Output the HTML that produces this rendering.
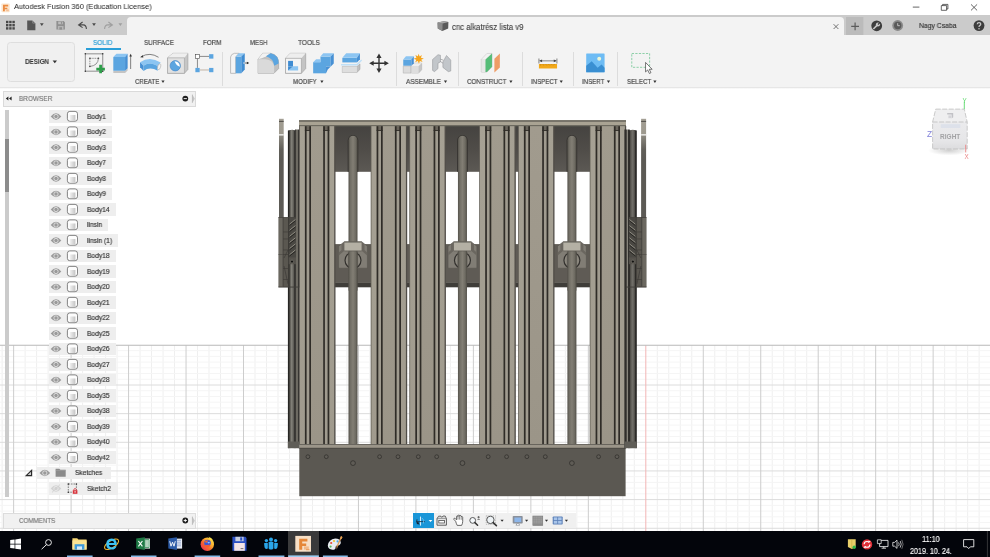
<!DOCTYPE html>
<html>
<head>
<meta charset="utf-8">
<title>Autodesk Fusion 360</title>
<style>
*{box-sizing:border-box;margin:0;padding:0}
html,body{width:990px;height:557px;overflow:hidden;background:#fff}
body{position:relative;font-family:"Liberation Sans",sans-serif;color:#333}
.abs{position:absolute}
.t{position:absolute;white-space:nowrap;line-height:1;will-change:transform}
#titlebar{left:0;top:0;width:990px;height:15px;background:#fff}
#graybar{left:0;top:15px;width:990px;height:20px;background:#cbcbcb}
#tabarea{left:127px;top:17px;width:716.5px;height:18px;background:#f3f3f3;border-radius:4px 4px 0 0}
#toolbar{left:0;top:35px;width:990px;height:52.4px;background:#f3f3f3}
#tbsh{left:0;top:87.4px;width:990px;height:2px;background:linear-gradient(#dcdcdc,#f4f4f4 60%,#fff)}
#canvas{left:0;top:88px;width:990px;height:443px}
#taskbar{left:0;top:531px;width:990px;height:26px;background:#03050b}
.tab{font-size:7.6px;color:#4a4a4a;top:38.7px;-webkit-text-stroke:0.2px #4a4a4a}
.grp{font-size:7.4px;color:#4a4a4a;top:78.3px;-webkit-text-stroke:0.2px #4a4a4a}
.sep{position:absolute;top:52px;height:33.5px;width:1px;background:#dcdcdc}
.row{position:absolute;left:49px;height:12.5px;background:#eeeeee}
.rt{position:absolute;left:86.6px;font-size:7.3px;color:#2e2e2e;white-space:nowrap;line-height:1;transform:scaleX(0.91);transform-origin:0 50%;will-change:transform;-webkit-text-stroke:0.15px #2e2e2e}
</style>
</head>
<body>
<!-- CANVAS -->
<svg id="canvas" class="abs" width="990" height="443" viewBox="0 88 990 443">
<!--GRID-->
<g fill="none" stroke-width="1">
<path stroke="#efefef" d="M2.14 345.3V531M25.12 345.3V531M36.62 345.3V531M48.11 345.3V531M59.61 345.3V531M82.59 345.3V531M94.09 345.3V531M105.58 345.3V531M117.08 345.3V531M140.06 345.3V531M151.56 345.3V531M163.05 345.3V531M174.55 345.3V531M197.53 345.3V531M209.03 345.3V531M220.52 345.3V531M232.02 345.3V531M255.00 345.3V531M266.50 345.3V531M277.99 345.3V531M289.49 345.3V531M312.47 345.3V531M323.97 345.3V531M335.46 345.3V531M346.96 345.3V531M369.94 345.3V531M381.44 345.3V531M392.93 345.3V531M404.43 345.3V531M427.41 345.3V531M438.91 345.3V531M450.40 345.3V531M461.90 345.3V531M484.88 345.3V531M496.38 345.3V531M507.87 345.3V531M519.37 345.3V531M542.35 345.3V531M553.85 345.3V531M565.34 345.3V531M576.84 345.3V531M599.82 345.3V531M611.32 345.3V531M622.81 345.3V531M634.31 345.3V531M657.29 345.3V531M668.79 345.3V531M680.28 345.3V531M691.78 345.3V531M714.76 345.3V531M726.26 345.3V531M737.75 345.3V531M749.25 345.3V531M772.23 345.3V531M783.73 345.3V531M795.22 345.3V531M806.72 345.3V531M829.70 345.3V531M841.20 345.3V531M852.69 345.3V531M864.19 345.3V531M887.17 345.3V531M898.67 345.3V531M910.16 345.3V531M921.66 345.3V531M944.64 345.3V531M956.14 345.3V531M967.63 345.3V531M979.13 345.3V531"/>
<path stroke="#f5f5f5" d="M0 350.62H990M0 356.35H990M0 362.08H990M0 367.81H990M0 373.54H990M0 379.27H990M0 390.73H990M0 396.46H990M0 402.19H990M0 407.92H990M0 419.38H990M0 425.11H990M0 430.84H990M0 436.57H990M0 448.03H990M0 453.76H990M0 459.49H990M0 465.22H990M0 476.68H990M0 482.41H990M0 488.14H990M0 493.87H990M0 505.33H990M0 511.06H990M0 516.79H990M0 522.52H990"/>
<path stroke="#dcdcdc" d="M0 385.00H990M0 413.65H990M0 442.30H990M0 470.95H990M0 499.60H990M0 528.25H990"/>
<path stroke="#cdcdcd" d="M13.63 345.3V531M71.10 345.3V531M128.57 345.3V531M186.04 345.3V531M243.51 345.3V531M300.98 345.3V531M358.45 345.3V531M415.92 345.3V531M473.39 345.3V531M530.86 345.3V531M588.33 345.3V531M703.27 345.3V531M760.74 345.3V531M818.21 345.3V531M875.68 345.3V531M933.15 345.3V531"/>
<path stroke="#f2b6b6" d="M645.80 345.3V531"/>
<path stroke="#b8b8b8" stroke-width="1.1" d="M0 345.3H990"/>
</g>
<!--/GRID-->
<!--MODEL-->
<defs>
<linearGradient id="gBack" x1="0" y1="0" x2="0" y2="1"><stop offset="0" stop-color="#454340"/><stop offset="0.5" stop-color="#4f4c48"/><stop offset="1" stop-color="#5c5954"/></linearGradient>
<linearGradient id="gRod" x1="0" y1="0" x2="1" y2="0"><stop offset="0" stop-color="#55524b"/><stop offset="0.22" stop-color="#726f66"/><stop offset="0.5" stop-color="#827e74"/><stop offset="0.8" stop-color="#6e6b62"/><stop offset="1" stop-color="#504d46"/></linearGradient>
<linearGradient id="gCylL" x1="0" y1="0" x2="1" y2="0"><stop offset="0" stop-color="#242321"/><stop offset="0.1" stop-color="#2a2927"/><stop offset="0.17" stop-color="#55534d"/><stop offset="0.33" stop-color="#84827a"/><stop offset="0.5" stop-color="#5f5d57"/><stop offset="0.55" stop-color="#383633"/><stop offset="0.67" stop-color="#383633"/><stop offset="0.70" stop-color="#6d6a62"/><stop offset="0.86" stop-color="#6d6a62"/><stop offset="0.9" stop-color="#383633"/><stop offset="1" stop-color="#383633"/></linearGradient>
<linearGradient id="gCylR" x1="1" y1="0" x2="0" y2="0"><stop offset="0" stop-color="#242321"/><stop offset="0.1" stop-color="#2a2927"/><stop offset="0.17" stop-color="#4f4d48"/><stop offset="0.32" stop-color="#72706a"/><stop offset="0.5" stop-color="#5a5852"/><stop offset="0.55" stop-color="#302e2b"/><stop offset="0.69" stop-color="#302e2b"/><stop offset="0.72" stop-color="#88857c"/><stop offset="0.81" stop-color="#88857c"/><stop offset="0.84" stop-color="#302e2b"/><stop offset="1" stop-color="#302e2b"/></linearGradient>
<linearGradient id="gProf" x1="0" y1="0" x2="0" y2="1"><stop offset="0" stop-color="#a6a194"/><stop offset="0.5" stop-color="#a39e91"/><stop offset="1" stop-color="#a09a8d"/></linearGradient>
<linearGradient id="gFace" x1="0" y1="0" x2="0" y2="1"><stop offset="0" stop-color="#a19b8e"/><stop offset="0.5" stop-color="#9e988b"/><stop offset="1" stop-color="#9b9588"/></linearGradient>
<linearGradient id="gBar" gradientUnits="userSpaceOnUse" x1="0" y1="118.8" x2="0" y2="160"><stop offset="0" stop-color="#a39f94"/><stop offset="0.36" stop-color="#9d998e"/><stop offset="0.42" stop-color="#8a877e"/><stop offset="0.75" stop-color="#615f59"/><stop offset="1" stop-color="#5c5a55"/></linearGradient>
</defs>
<rect x="299.30" y="126.00" width="326.30" height="45.80" fill="url(#gBack)"/>
<rect x="299.30" y="244.10" width="326.30" height="38.80" fill="#5f5b55"/>
<rect x="299.30" y="282.80" width="326.30" height="4.50" fill="#3f3d39"/>
<path d="M347.70 171.8V140.40A5.3 5.3 0 0 1 358.30 140.40V171.8Z" fill="#33312e"/>
<path d="M348.50 444.3V140.30A4.5 4.5 0 0 1 357.50 140.30V444.3Z" fill="url(#gRod)"/>
<path d="M338.60 268.2V246.3L344.20 241.8H361.80L367.40 246.3V268.2Z" fill="#817d75" stroke="#55524c" stroke-width="0.5"/>
<circle cx="353.00" cy="260.3" r="8.0" fill="#8b877e" stroke="#33312e" stroke-width="1.2"/>
<rect x="348.50" y="250.6" width="9" height="40" fill="url(#gRod)"/>
<path d="M348.40 252V268M357.60 252V268" stroke="#4a4843" stroke-width="0.5"/>
<path d="M341.50 244.3L344.40 241.9V250.7L338.80 255.6V252.6L341.50 250Z" fill="#6a665f"/>
<path d="M364.50 244.3L361.60 241.9V250.7L367.20 255.6V252.6L364.50 250Z" fill="#6a665f"/>
<rect x="344.40" y="250.40" width="17.20" height="0.90" fill="#5a5750"/>
<rect x="344.50" y="242.40" width="17.00" height="8.10" fill="#b4b0a4"/>
<rect x="344.20" y="241.50" width="17.60" height="0.90" fill="#6a665f"/>
<path d="M457.15 171.8V140.40A5.3 5.3 0 0 1 467.75 140.40V171.8Z" fill="#33312e"/>
<path d="M457.95 444.3V140.30A4.5 4.5 0 0 1 466.95 140.30V444.3Z" fill="url(#gRod)"/>
<path d="M448.05 268.2V246.3L453.65 241.8H471.25L476.85 246.3V268.2Z" fill="#817d75" stroke="#55524c" stroke-width="0.5"/>
<circle cx="462.45" cy="260.3" r="8.0" fill="#8b877e" stroke="#33312e" stroke-width="1.2"/>
<rect x="457.95" y="250.6" width="9" height="40" fill="url(#gRod)"/>
<path d="M457.85 252V268M467.05 252V268" stroke="#4a4843" stroke-width="0.5"/>
<path d="M450.95 244.3L453.85 241.9V250.7L448.25 255.6V252.6L450.95 250Z" fill="#6a665f"/>
<path d="M473.95 244.3L471.05 241.9V250.7L476.65 255.6V252.6L473.95 250Z" fill="#6a665f"/>
<rect x="453.85" y="250.40" width="17.20" height="0.90" fill="#5a5750"/>
<rect x="453.95" y="242.40" width="17.00" height="8.10" fill="#b4b0a4"/>
<rect x="453.65" y="241.50" width="17.60" height="0.90" fill="#6a665f"/>
<path d="M566.60 171.8V140.40A5.3 5.3 0 0 1 577.20 140.40V171.8Z" fill="#33312e"/>
<path d="M567.40 444.3V140.30A4.5 4.5 0 0 1 576.40 140.30V444.3Z" fill="url(#gRod)"/>
<path d="M557.50 268.2V246.3L563.10 241.8H580.70L586.30 246.3V268.2Z" fill="#817d75" stroke="#55524c" stroke-width="0.5"/>
<circle cx="571.90" cy="260.3" r="8.0" fill="#8b877e" stroke="#33312e" stroke-width="1.2"/>
<rect x="567.40" y="250.6" width="9" height="40" fill="url(#gRod)"/>
<path d="M567.30 252V268M576.50 252V268" stroke="#4a4843" stroke-width="0.5"/>
<path d="M560.40 244.3L563.30 241.9V250.7L557.70 255.6V252.6L560.40 250Z" fill="#6a665f"/>
<path d="M583.40 244.3L580.50 241.9V250.7L586.10 255.6V252.6L583.40 250Z" fill="#6a665f"/>
<rect x="563.30" y="250.40" width="17.20" height="0.90" fill="#5a5750"/>
<rect x="563.40" y="242.40" width="17.00" height="8.10" fill="#b4b0a4"/>
<rect x="563.10" y="241.50" width="17.60" height="0.90" fill="#6a665f"/>
<rect x="299.30" y="126.00" width="35.60" height="318.30" fill="url(#gProf)"/>
<rect x="310.80" y="126.00" width="12.60" height="318.30" fill="url(#gFace)"/>
<rect x="299.00" y="126.00" width="0.70" height="318.30" fill="#5d5a52"/>
<rect x="334.20" y="126.00" width="1.30" height="318.30" fill="#504d47"/>
<rect x="304.90" y="126.00" width="6.10" height="318.30" fill="#a09b8f"/>
<rect x="304.90" y="126.00" width="6.10" height="4.40" fill="#6a655c"/>
<rect x="304.90" y="130.00" width="6.10" height="0.90" fill="#2f2c27"/>
<rect x="304.90" y="126.00" width="1.70" height="318.30" fill="#2f2c27"/>
<rect x="309.30" y="126.00" width="1.70" height="318.30" fill="#2f2c27"/>
<rect x="323.20" y="126.00" width="6.10" height="318.30" fill="#a09b8f"/>
<rect x="323.20" y="126.00" width="6.10" height="4.40" fill="#6a655c"/>
<rect x="323.20" y="130.00" width="6.10" height="0.90" fill="#2f2c27"/>
<rect x="323.20" y="126.00" width="1.70" height="318.30" fill="#2f2c27"/>
<rect x="327.60" y="126.00" width="1.70" height="318.30" fill="#2f2c27"/>
<rect x="590.00" y="126.00" width="35.60" height="318.30" fill="url(#gProf)"/>
<rect x="601.50" y="126.00" width="12.60" height="318.30" fill="url(#gFace)"/>
<rect x="589.70" y="126.00" width="0.70" height="318.30" fill="#5d5a52"/>
<rect x="624.90" y="126.00" width="1.30" height="318.30" fill="#504d47"/>
<rect x="595.60" y="126.00" width="6.10" height="318.30" fill="#a09b8f"/>
<rect x="595.60" y="126.00" width="6.10" height="4.40" fill="#6a655c"/>
<rect x="595.60" y="130.00" width="6.10" height="0.90" fill="#2f2c27"/>
<rect x="595.60" y="126.00" width="1.70" height="318.30" fill="#2f2c27"/>
<rect x="600.00" y="126.00" width="1.70" height="318.30" fill="#2f2c27"/>
<rect x="613.90" y="126.00" width="6.10" height="318.30" fill="#a09b8f"/>
<rect x="613.90" y="126.00" width="6.10" height="4.40" fill="#6a655c"/>
<rect x="613.90" y="130.00" width="6.10" height="0.90" fill="#2f2c27"/>
<rect x="613.90" y="126.00" width="1.70" height="318.30" fill="#2f2c27"/>
<rect x="618.30" y="126.00" width="1.70" height="318.30" fill="#2f2c27"/>
<rect x="371.00" y="126.00" width="35.60" height="318.30" fill="url(#gProf)"/>
<rect x="382.50" y="126.00" width="12.60" height="318.30" fill="url(#gFace)"/>
<rect x="370.70" y="126.00" width="0.70" height="318.30" fill="#5d5a52"/>
<rect x="405.90" y="126.00" width="1.30" height="318.30" fill="#504d47"/>
<rect x="376.60" y="126.00" width="6.10" height="318.30" fill="#a09b8f"/>
<rect x="376.60" y="126.00" width="6.10" height="4.40" fill="#6a655c"/>
<rect x="376.60" y="130.00" width="6.10" height="0.90" fill="#2f2c27"/>
<rect x="376.60" y="126.00" width="1.70" height="318.30" fill="#2f2c27"/>
<rect x="381.00" y="126.00" width="1.70" height="318.30" fill="#2f2c27"/>
<rect x="394.90" y="126.00" width="6.10" height="318.30" fill="#a09b8f"/>
<rect x="394.90" y="126.00" width="6.10" height="4.40" fill="#6a655c"/>
<rect x="394.90" y="130.00" width="6.10" height="0.90" fill="#2f2c27"/>
<rect x="394.90" y="126.00" width="1.70" height="318.30" fill="#2f2c27"/>
<rect x="399.30" y="126.00" width="1.70" height="318.30" fill="#2f2c27"/>
<rect x="518.30" y="126.00" width="35.60" height="318.30" fill="url(#gProf)"/>
<rect x="529.80" y="126.00" width="12.60" height="318.30" fill="url(#gFace)"/>
<rect x="518.00" y="126.00" width="0.70" height="318.30" fill="#5d5a52"/>
<rect x="553.20" y="126.00" width="1.30" height="318.30" fill="#504d47"/>
<rect x="523.90" y="126.00" width="6.10" height="318.30" fill="#a09b8f"/>
<rect x="523.90" y="126.00" width="6.10" height="4.40" fill="#6a655c"/>
<rect x="523.90" y="130.00" width="6.10" height="0.90" fill="#2f2c27"/>
<rect x="523.90" y="126.00" width="1.70" height="318.30" fill="#2f2c27"/>
<rect x="528.30" y="126.00" width="1.70" height="318.30" fill="#2f2c27"/>
<rect x="542.20" y="126.00" width="6.10" height="318.30" fill="#a09b8f"/>
<rect x="542.20" y="126.00" width="6.10" height="4.40" fill="#6a655c"/>
<rect x="542.20" y="130.00" width="6.10" height="0.90" fill="#2f2c27"/>
<rect x="542.20" y="126.00" width="1.70" height="318.30" fill="#2f2c27"/>
<rect x="546.60" y="126.00" width="1.70" height="318.30" fill="#2f2c27"/>
<rect x="409.70" y="126.00" width="35.60" height="318.30" fill="url(#gProf)"/>
<rect x="421.20" y="126.00" width="12.60" height="318.30" fill="url(#gFace)"/>
<rect x="409.40" y="126.00" width="0.70" height="318.30" fill="#5d5a52"/>
<rect x="444.60" y="126.00" width="1.30" height="318.30" fill="#504d47"/>
<rect x="415.30" y="126.00" width="6.10" height="318.30" fill="#a09b8f"/>
<rect x="415.30" y="126.00" width="6.10" height="4.40" fill="#6a655c"/>
<rect x="415.30" y="130.00" width="6.10" height="0.90" fill="#2f2c27"/>
<rect x="415.30" y="126.00" width="1.70" height="318.30" fill="#2f2c27"/>
<rect x="419.70" y="126.00" width="1.70" height="318.30" fill="#2f2c27"/>
<rect x="433.60" y="126.00" width="6.10" height="318.30" fill="#a09b8f"/>
<rect x="433.60" y="126.00" width="6.10" height="4.40" fill="#6a655c"/>
<rect x="433.60" y="130.00" width="6.10" height="0.90" fill="#2f2c27"/>
<rect x="433.60" y="126.00" width="1.70" height="318.30" fill="#2f2c27"/>
<rect x="438.00" y="126.00" width="1.70" height="318.30" fill="#2f2c27"/>
<rect x="479.60" y="126.00" width="35.60" height="318.30" fill="url(#gProf)"/>
<rect x="491.10" y="126.00" width="12.60" height="318.30" fill="url(#gFace)"/>
<rect x="479.30" y="126.00" width="0.70" height="318.30" fill="#5d5a52"/>
<rect x="514.50" y="126.00" width="1.30" height="318.30" fill="#504d47"/>
<rect x="485.20" y="126.00" width="6.10" height="318.30" fill="#a09b8f"/>
<rect x="485.20" y="126.00" width="6.10" height="4.40" fill="#6a655c"/>
<rect x="485.20" y="130.00" width="6.10" height="0.90" fill="#2f2c27"/>
<rect x="485.20" y="126.00" width="1.70" height="318.30" fill="#2f2c27"/>
<rect x="489.60" y="126.00" width="1.70" height="318.30" fill="#2f2c27"/>
<rect x="503.50" y="126.00" width="6.10" height="318.30" fill="#a09b8f"/>
<rect x="503.50" y="126.00" width="6.10" height="4.40" fill="#6a655c"/>
<rect x="503.50" y="130.00" width="6.10" height="0.90" fill="#2f2c27"/>
<rect x="503.50" y="126.00" width="1.70" height="318.30" fill="#2f2c27"/>
<rect x="507.90" y="126.00" width="1.70" height="318.30" fill="#2f2c27"/>
<rect x="299.00" y="120.20" width="327.00" height="5.90" fill="#a9a393"/>
<rect x="299.00" y="120.20" width="327.00" height="1.60" fill="#6c685f"/>
<rect x="299.00" y="125.30" width="327.00" height="0.80" fill="#55524b"/>
<rect x="299.30" y="444.30" width="326.30" height="4.00" fill="#9b9589"/>
<rect x="299.30" y="444.00" width="326.30" height="0.70" fill="#4c4943"/>
<rect x="299.30" y="448.00" width="326.30" height="48.20" fill="#5b5852"/>
<rect x="299.30" y="447.80" width="326.30" height="0.80" fill="#47443f"/>
<circle cx="307.90" cy="456.70" r="1.90" fill="#5f5c56" stroke="#2d2b28" stroke-width="0.7"/>
<circle cx="617.00" cy="456.70" r="1.90" fill="#5f5c56" stroke="#2d2b28" stroke-width="0.7"/>
<circle cx="326.30" cy="456.70" r="1.90" fill="#5f5c56" stroke="#2d2b28" stroke-width="0.7"/>
<circle cx="598.60" cy="456.70" r="1.90" fill="#5f5c56" stroke="#2d2b28" stroke-width="0.7"/>
<circle cx="379.60" cy="456.70" r="1.90" fill="#5f5c56" stroke="#2d2b28" stroke-width="0.7"/>
<circle cx="545.30" cy="456.70" r="1.90" fill="#5f5c56" stroke="#2d2b28" stroke-width="0.7"/>
<circle cx="398.00" cy="456.70" r="1.90" fill="#5f5c56" stroke="#2d2b28" stroke-width="0.7"/>
<circle cx="526.90" cy="456.70" r="1.90" fill="#5f5c56" stroke="#2d2b28" stroke-width="0.7"/>
<circle cx="418.30" cy="456.70" r="1.90" fill="#5f5c56" stroke="#2d2b28" stroke-width="0.7"/>
<circle cx="506.60" cy="456.70" r="1.90" fill="#5f5c56" stroke="#2d2b28" stroke-width="0.7"/>
<circle cx="436.70" cy="456.70" r="1.90" fill="#5f5c56" stroke="#2d2b28" stroke-width="0.7"/>
<circle cx="488.20" cy="456.70" r="1.90" fill="#5f5c56" stroke="#2d2b28" stroke-width="0.7"/>
<circle cx="353.00" cy="463.10" r="2.40" fill="#5f5c56" stroke="#2d2b28" stroke-width="0.7"/>
<circle cx="462.45" cy="463.10" r="2.40" fill="#5f5c56" stroke="#2d2b28" stroke-width="0.7"/>
<circle cx="571.90" cy="463.10" r="2.40" fill="#5f5c56" stroke="#2d2b28" stroke-width="0.7"/>
<path d="M287.9 448.2V130.6Q292 129.2 295 130.2V129.4H299.2V448.2Z" fill="url(#gCylL)"/>
<path d="M636.8 448.2V130.6Q632.8 129.2 629.8 130.2V129.4H624.4V448.2Z" fill="url(#gCylR)"/>
<rect x="287.90" y="441.50" width="11.40" height="6.50" fill="#5f5d57"/>
<rect x="624.40" y="441.50" width="12.40" height="6.50" fill="#5f5d57"/>
<rect x="279.00" y="118.80" width="4.70" height="168.00" fill="url(#gBar)"/>
<rect x="641.10" y="118.80" width="5.00" height="168.00" fill="url(#gBar)"/>
<rect x="279.00" y="120.90" width="4.70" height="0.90" fill="#45433f"/>
<rect x="279.00" y="134.20" width="4.70" height="1.30" fill="#f6f6f4"/>
<rect x="641.10" y="120.90" width="5.00" height="0.90" fill="#45433f"/>
<rect x="641.10" y="134.20" width="5.00" height="1.30" fill="#f6f6f4"/>
<rect x="278.40" y="217.40" width="4.60" height="69.70" fill="#6b6860"/>
<rect x="283.00" y="217.40" width="5.70" height="69.70" fill="#5a5750"/>
<rect x="288.70" y="217.40" width="7.30" height="45.00" fill="#4a4843"/>
<rect x="278.40" y="217.00" width="17.60" height="0.80" fill="#45433e"/>
<rect x="278.40" y="286.60" width="20.80" height="0.90" fill="#3f3d39"/>
<rect x="282.70" y="217.40" width="0.70" height="69.10" fill="#3c3a36"/>
<rect x="288.40" y="217.40" width="0.70" height="69.10" fill="#34322f"/>
<rect x="283.00" y="231.60" width="5.70" height="0.70" fill="#3f3d39"/>
<rect x="283.00" y="238.60" width="5.70" height="0.70" fill="#3f3d39"/>
<rect x="283.00" y="249.60" width="5.70" height="0.70" fill="#3f3d39"/>
<rect x="283.00" y="254.20" width="5.70" height="0.70" fill="#3f3d39"/>
<rect x="283.00" y="268.00" width="5.70" height="0.70" fill="#3f3d39"/>
<rect x="283.00" y="279.00" width="5.70" height="0.70" fill="#3f3d39"/>
<rect x="278.40" y="254.00" width="4.60" height="0.60" fill="#4a4843"/>
<path d="M289.60 224.10L295.40 219.50M289.60 230.20L295.40 225.60M289.60 236.30L295.40 231.70M289.60 242.40L295.40 237.80M289.60 248.50L295.40 243.90M289.60 254.60L295.40 250.00" fill="none" stroke="#8e8b81" stroke-width="1.0"/>
<path d="M289.60 225.50L295.40 220.90M289.60 231.60L295.40 227.00M289.60 237.70L295.40 233.10M289.60 243.80L295.40 239.20M289.60 249.90L295.40 245.30M289.60 256.00L295.40 251.40" fill="none" stroke="#24231f" stroke-width="0.9"/>
<rect x="288.70" y="257.40" width="7.30" height="6.80" fill="#55524c"/>
<circle cx="292.00" cy="261.6" r="1.5" fill="#141312" stroke="#8d8a80" stroke-width="0.5"/>
<path d="M284.00 266L288.00 284M284.00 258L288.00 250" stroke="#3c3a36" stroke-width="0.7" fill="none"/>
<rect x="641.90" y="217.40" width="4.60" height="69.70" fill="#6b6860"/>
<rect x="636.20" y="217.40" width="5.70" height="69.70" fill="#5a5750"/>
<rect x="628.90" y="217.40" width="7.30" height="45.00" fill="#4a4843"/>
<rect x="628.90" y="217.00" width="17.60" height="0.80" fill="#45433e"/>
<rect x="625.70" y="286.60" width="20.80" height="0.90" fill="#3f3d39"/>
<rect x="641.50" y="217.40" width="0.70" height="69.10" fill="#3c3a36"/>
<rect x="635.80" y="217.40" width="0.70" height="69.10" fill="#34322f"/>
<rect x="636.20" y="231.60" width="5.70" height="0.70" fill="#3f3d39"/>
<rect x="636.20" y="238.60" width="5.70" height="0.70" fill="#3f3d39"/>
<rect x="636.20" y="249.60" width="5.70" height="0.70" fill="#3f3d39"/>
<rect x="636.20" y="254.20" width="5.70" height="0.70" fill="#3f3d39"/>
<rect x="636.20" y="268.00" width="5.70" height="0.70" fill="#3f3d39"/>
<rect x="636.20" y="279.00" width="5.70" height="0.70" fill="#3f3d39"/>
<rect x="641.90" y="254.00" width="4.60" height="0.60" fill="#4a4843"/>
<path d="M635.30 224.10L629.50 219.50M635.30 230.20L629.50 225.60M635.30 236.30L629.50 231.70M635.30 242.40L629.50 237.80M635.30 248.50L629.50 243.90M635.30 254.60L629.50 250.00" fill="none" stroke="#8e8b81" stroke-width="1.0"/>
<path d="M635.30 225.50L629.50 220.90M635.30 231.60L629.50 227.00M635.30 237.70L629.50 233.10M635.30 243.80L629.50 239.20M635.30 249.90L629.50 245.30M635.30 256.00L629.50 251.40" fill="none" stroke="#24231f" stroke-width="0.9"/>
<rect x="628.90" y="257.40" width="7.30" height="6.80" fill="#55524c"/>
<circle cx="632.90" cy="261.6" r="1.5" fill="#141312" stroke="#8d8a80" stroke-width="0.5"/>
<path d="M640.90 266L636.90 284M640.90 258L636.90 250" stroke="#3c3a36" stroke-width="0.7" fill="none"/>
<!--/MODEL-->
<!--CUBE-->
<defs><linearGradient id="gcf" x1="0" y1="0" x2="0" y2="1"><stop offset="0" stop-color="#ebebed"/><stop offset="0.7" stop-color="#e6e6e8"/><stop offset="1" stop-color="#dcdcde"/></linearGradient>
<radialGradient id="gsh" cx="0.5" cy="0.5" r="0.5"><stop offset="0" stop-color="#888" stop-opacity="0.4"/><stop offset="1" stop-color="#999" stop-opacity="0"/></radialGradient></defs>
<ellipse cx="949" cy="150.5" rx="21" ry="5" fill="url(#gsh)"/>
<path d="M935.7 109.1H964.3L967.2 122H932.6Z" fill="#efeff0"/>
<path d="M932.6 122H967.2V149H932.6Z" fill="url(#gcf)"/>
<rect x="940.8" y="124.2" width="19.5" height="3.8" fill="#dde1ea"/>
<path d="M935.7 109.1H964.3L967.2 122V149H932.6V122Z" fill="none" stroke="#b8b8b8" stroke-width="0.7" stroke-dasharray="5 1.5"/>
<path d="M932.6 122H967.2" stroke="#b8b8b8" stroke-width="0.7" stroke-dasharray="5 1.5"/>
<path d="M947.2 113H953.2V117.2L951.6 118.4V114.6H947.2Z" fill="#c2c2c6"/><path d="M948.4 115.4H951V118.2H948.4Z" fill="#d4d4d8"/>
<path d="M964.3 109.1V101.6" stroke="#5bd86a" stroke-width="0.9"/><path d="M965.7 144.7V152.4" stroke="#ea8484" stroke-width="0.9"/>
<g font-family="Liberation Sans, sans-serif" style="will-change:transform">
<text x="940.1" y="139" font-size="7.8" fill="#a2a2a4" textLength="20.2" lengthAdjust="spacingAndGlyphs" font-weight="bold">RIGHT</text>
<text x="926.9" y="136.5" font-size="9.6" fill="#8282da" textLength="5.1" lengthAdjust="spacingAndGlyphs">Z</text>
<text x="962.5" y="102.7" font-size="8" fill="#5bd86a" textLength="4.2" lengthAdjust="spacingAndGlyphs">Y</text>
<text x="964.5" y="158.6" font-size="8" fill="#ea8484" textLength="4.2" lengthAdjust="spacingAndGlyphs">X</text>
</g>

<!--/CUBE-->
</svg>

<!-- TITLE BAR -->
<div id="titlebar" class="abs"></div>
<div id="graybar" class="abs"></div>
<div id="tabarea" class="abs"></div>
<div id="toolbar" class="abs"></div><div id="tbsh" class="abs"></div>
<!--CHROME-->
<!-- title -->
<svg class="abs" style="left:0.8px;top:2.6px" width="10" height="10" viewBox="0 0 12 12"><rect x="0.5" y="0.5" width="10" height="10.5" rx="1" fill="#fbe6cf"/><path d="M2.4 2.2H8.6V4.2H4.6V5.6H7.6V7.4H4.6V10H2.4Z" fill="#ec8c42"/><path d="M6.2 7.6H9.4V9.9H6.2Z" fill="#f5c096"/></svg>
<div class="t" id="ttl" style="left:14.3px;top:3.3px;font-size:8px;color:#1a1a1a;transform:scaleX(0.9291);transform-origin:0 50%">Autodesk Fusion 360 (Education License)</div>
<svg class="abs" style="left:900px;top:0" width="90" height="15" viewBox="900 0 90 15" fill="none" stroke="#333" stroke-width="0.75"><path d="M912.8 7.1H919.4"/><path d="M941.3 5.6H946.6V10.3H941.3Z"/><path d="M942.6 5.6V4.4H947.9V9H946.6"/><path d="M971 4.4L977.1 10.4M977.1 4.4L971 10.4"/></svg>
<!-- quick access icons -->
<svg class="abs" style="left:0;top:15px" width="130" height="20" viewBox="0 15 130 20">
<g fill="#484848"><rect x="6" y="20.8" width="2.4" height="2.4"/><rect x="9.2" y="20.8" width="2.4" height="2.4"/><rect x="12.4" y="20.8" width="2.4" height="2.4"/><rect x="6" y="24" width="2.4" height="2.4"/><rect x="9.2" y="24" width="2.4" height="2.4"/><rect x="12.4" y="24" width="2.4" height="2.4"/><rect x="6" y="27.2" width="2.4" height="2.4"/><rect x="9.2" y="27.2" width="2.4" height="2.4"/><rect x="12.4" y="27.2" width="2.4" height="2.4"/></g>
<path d="M27.2 20.4H32.4L35.4 23.4V30.2H27.2Z" fill="#555"/><path d="M32.6 20.4V23.2H35.4Z" fill="#cbcbcb"/><path d="M32.9 20.9V22.9H34.9Z" fill="#6a6a6a"/>
<path d="M39.9 23.2H43.7L41.8 25.9Z" fill="#4a4a4a"/>
<path d="M56.4 21H63.6L64.9 22.3V29.6H56.4Z" fill="#8f8f8f"/><rect x="58.2" y="21.5" width="4.6" height="2.7" fill="#bcbcbc"/><rect x="60.9" y="21.8" width="1.1" height="2" fill="#8f8f8f"/><rect x="57.9" y="26" width="5.6" height="3.6" fill="#b6b6b6"/><rect x="59.4" y="27.2" width="2.6" height="2.4" fill="#8f8f8f"/>
<path d="M82.6 22L78.6 25L82.6 27.6M78.9 24.9H83.2Q86.3 25 86.4 29" fill="none" stroke="#4a4a4a" stroke-width="1.1"/>
<path d="M92.1 23.2H95.9L94 25.9Z" fill="#4a4a4a"/>
<path d="M108.4 22L112.4 25L108.4 27.6M112.1 24.9H107.8Q104.7 25 104.6 29" fill="none" stroke="#9f9f9f" stroke-width="1.1"/>
<path d="M118.5 23.2H122.3L120.4 25.9Z" fill="#9f9f9f"/>
</svg>
<!-- doc tab -->
<svg class="abs" style="left:437px;top:20px" width="13" height="12" viewBox="0 0 13 12"><path d="M0.6 2.4L6.8 1.2L11.4 2L11.2 8.4L5.4 11L0.8 8.6Z" fill="#5a5a5a"/><path d="M0.6 2.4L5.6 3.6L5.4 11L0.8 8.6Z" fill="#8c8c8c"/><path d="M0.6 2.4L6.8 1.2L11.4 2L5.6 3.6Z" fill="#a8a8a8"/></svg>
<div class="t" id="doc" style="left:451.5px;top:23.3px;font-size:8.3px;color:#3a3a3a;-webkit-text-stroke:0.1px #3a3a3a;transform:scaleX(0.9341);transform-origin:0 50%">cnc alkatrész lista v9</div>
<svg class="abs" style="left:830px;top:15px" width="160" height="20" viewBox="830 15 160 20">
<path d="M833.6 24.2L838.4 29M838.4 24.2L833.6 29" stroke="#666" stroke-width="0.9" fill="none"/>
<rect x="846" y="17" width="17.4" height="18" fill="#bbbbbb"/>
<path d="M851.2 26.4H859M855.1 22.5V30.3" stroke="#5c5c5c" stroke-width="1.2" fill="none"/>
<circle cx="876.7" cy="25.8" r="5.4" fill="#3d3d3d"/><path d="M873.4 29L877 25.4" stroke="#cbcbcb" stroke-width="1.5"/><circle cx="878" cy="24.5" r="2.1" fill="#cbcbcb"/><path d="M878 24.5L880.4 22.1" stroke="#3d3d3d" stroke-width="1.2"/>
<circle cx="897.7" cy="25.5" r="5.4" fill="#8a8a8a"/><circle cx="897.7" cy="25.5" r="3.7" fill="#5a5a5a"/><path d="M897.7 23.2V25.7H899.8" stroke="#cbcbcb" stroke-width="0.9" fill="none"/>
<circle cx="979" cy="25.6" r="5.4" fill="#3d3d3d"/><path d="M977.2 24.2Q977.3 22.6 979 22.6Q980.8 22.6 980.8 24.1Q980.8 25 979.7 25.6Q979 26 979 27" stroke="#cbcbcb" stroke-width="1.2" fill="none"/><circle cx="979" cy="28.7" r="0.75" fill="#cbcbcb"/>
</svg>
<div class="t" id="usr" style="left:918.8px;top:22px;font-size:7.4px;color:#333;-webkit-text-stroke:0.15px #333;transform:scaleX(0.9220);transform-origin:0 50%">Nagy Csaba</div>
<!-- toolbar tabs -->
<div class="t tab" id="tb1" style="left:93px;color:#2a9fd8;-webkit-text-stroke:0.2px #2a9fd8;transform:scaleX(0.8510);transform-origin:0 50%">SOLID</div>
<div class="abs" style="left:85.5px;top:48px;width:35px;height:1.7px;background:#2a9fd8"></div>
<div class="t tab" id="tb2" style="left:144px;transform:scaleX(0.8362);transform-origin:0 50%">SURFACE</div>
<div class="t tab" id="tb3" style="left:203px;transform:scaleX(0.8274);transform-origin:0 50%">FORM</div>
<div class="t tab" id="tb4" style="left:250.3px;transform:scaleX(0.7926);transform-origin:0 50%">MESH</div>
<div class="t tab" id="tb5" style="left:297.6px;transform:scaleX(0.8552);transform-origin:0 50%">TOOLS</div>
<!-- design button -->
<div class="abs" style="left:7.3px;top:42.3px;width:67.4px;height:39.3px;border:1px solid #dedede;border-radius:3.5px;background:#f0f0f0"></div>
<div class="t" id="dsg" style="left:25.2px;top:58.4px;font-size:7.2px;color:#333;font-weight:bold;letter-spacing:-0.1px;transform:scaleX(0.8899);transform-origin:0 50%">DESIGN</div>
<svg class="abs" style="left:52px;top:60px" width="6" height="4"><path d="M0.6 0.6H5L2.8 3.2Z" fill="#333"/></svg>
<!-- group labels -->
<div class="t grp" id="g1" style="left:134.5px;transform:scaleX(0.8255);transform-origin:0 50%">CREATE</div>
<div class="t grp" id="g2" style="left:293px;transform:scaleX(0.8243);transform-origin:0 50%">MODIFY</div>
<div class="t grp" id="g3" style="left:406.2px;transform:scaleX(0.8734);transform-origin:0 50%">ASSEMBLE</div>
<div class="t grp" id="g4" style="left:467.3px;transform:scaleX(0.8490);transform-origin:0 50%">CONSTRUCT</div>
<div class="t grp" id="g5" style="left:531.3px;transform:scaleX(0.8273);transform-origin:0 50%">INSPECT</div>
<div class="t grp" id="g6" style="left:582.2px;transform:scaleX(0.8269);transform-origin:0 50%">INSERT</div>
<div class="t grp" id="g7" style="left:626.7px;transform:scaleX(0.8413);transform-origin:0 50%">SELECT</div>
<svg class="abs" style="left:0;top:78px" width="700" height="8" viewBox="0 78 700 8" fill="#333"><path d="M161.4 80.5H164.6L163.0 82.9Z"/><path d="M320.3 80.5H323.5L321.9 82.9Z"/><path d="M443.9 80.5H447.1L445.5 82.9Z"/><path d="M509.3 80.5H512.5L510.9 82.9Z"/><path d="M559.6 80.5H562.8L561.2 82.9Z"/><path d="M606.9 80.5H610.1L608.5 82.9Z"/><path d="M653.3 80.5H656.5L654.9 82.9Z"/></svg>
<div class="sep" style="left:222px"></div><div class="sep" style="left:396px"></div><div class="sep" style="left:458px"></div><div class="sep" style="left:522px"></div><div class="sep" style="left:572.5px"></div><div class="sep" style="left:617px"></div>
<!--ICONS-->
<svg class="abs" style="left:80px;top:48px" width="600" height="32" viewBox="80 48 600 32">
<!-- group A: origin 80,48 zoom 11.65 -->
<g transform="translate(80,48) scale(0.08584)">
 <g fill="none" stroke="#4a4a4a" stroke-width="7"><path d="M62 68H265V270H62Z"/></g>
 <g fill="#333"><circle cx="62" cy="68" r="9"/><circle cx="265" cy="68" r="9"/><circle cx="62" cy="270" r="9"/><circle cx="265" cy="270" r="9"/></g>
 <path d="M115 120H215M115 120V215" fill="none" stroke="#555" stroke-width="7" stroke-dasharray="18 9"/>
 <path d="M215 120Q210 205 115 215" fill="none" stroke="#555" stroke-width="7"/>
 <g fill="#444"><circle cx="115" cy="120" r="9"/><circle cx="215" cy="120" r="9"/><circle cx="115" cy="215" r="9"/></g>
 <path d="M190 245H290M240 195V295" stroke="#2e9e4a" stroke-width="32" fill="none"/>
 <!-- extrude -->
 <path d="M388 265H525L555 235V262L525 292H388Z" fill="#c4c4c4"/>
 <path d="M388 105H525V265H388Z" fill="#5ba5e0"/>
 <path d="M388 105L425 66H555L525 105Z" fill="#8cc5f2"/>
 <path d="M525 105L555 66V235L525 265Z" fill="#4790d4"/>
 <path d="M590 245V90" stroke="#333" stroke-width="7" fill="none"/><path d="M575 100L590 68L605 100Z" fill="#333"/>
 <!-- revolve -->
 <path d="M915 108Q815 45 715 100" fill="none" stroke="#333" stroke-width="7"/><path d="M700 108L732 84L738 112Z" fill="#333"/>
 <path d="M700 165Q815 90 940 170L905 210Q815 150 740 208Z" fill="#8cc5f2"/>
 <path d="M700 165L740 208V268L700 225Z" fill="#4790d4"/>
 <path d="M740 208Q815 150 905 210V265Q815 212 740 268Z" fill="#5ba5e0"/>
 <ellipse cx="922" cy="218" rx="17" ry="36" fill="#f4f4f4" stroke="#999" stroke-width="5" transform="rotate(18 922 218)"/>
</g>
<!-- group B: origin 160,48 -->
<g transform="translate(160,48) scale(0.08584)">
 <path d="M88 115L150 62H325V250L285 295H88Z" fill="#c6c6c6" stroke="#9a9a9a" stroke-width="7" stroke-linejoin="round"/>
 <path d="M88 115L150 62H325L285 115Z" fill="#efefef"/>
 <path d="M88 115H285V295H88Z" fill="#e1e1e1" stroke="#9a9a9a" stroke-width="6"/>
 <circle cx="178" cy="207" r="60" fill="#5ba5e0" stroke="#4a8ccc" stroke-width="9"/>
 <path d="M170 155Q228 160 232 218Q190 210 170 155Z" fill="#fff"/>
 <!-- pattern -->
 <path d="M462 98H572M436 125V232" stroke="#444" stroke-width="7" fill="none"/>
 <path d="M462 256H572" stroke="#b8a898" stroke-width="10" fill="none"/>
 <rect x="412" y="74" width="48" height="48" fill="#fff" stroke="#444" stroke-width="7"/>
 <rect x="572" y="72" width="50" height="52" fill="#5ba5e0"/><rect x="412" y="232" width="50" height="50" fill="#5ba5e0"/><rect x="572" y="232" width="50" height="50" fill="#5ba5e0"/>
</g>
<!-- group C: origin 225,48 -->
<g transform="translate(225,48) scale(0.08584)">
 <path d="M65 105Q70 70 110 62H165L125 105V295H65Z" fill="#f4f4f4" stroke="#9a9a9a" stroke-width="7"/>
 <path d="M125 100H190V295H125Z" fill="#5ba5e0"/>
 <path d="M125 100L160 60H230L190 100Z" fill="#8cc5f2"/>
 <path d="M190 100L230 60V250L190 295Z" fill="#3f8cd2"/>
 <path d="M210 175H262" stroke="#e8e8e8" stroke-width="10"/><path d="M232 175H262" stroke="#222" stroke-width="7"/><path d="M255 160L282 175L255 190Z" fill="#222"/>
 <!-- fillet -->
 <path d="M385 130L440 62H530Q625 80 625 180V240L570 295H385Z" fill="#c0c0c0" stroke="#9a9a9a" stroke-width="7" stroke-linejoin="round"/>
 <path d="M385 130L440 62H530L480 95Q440 120 385 130Z" fill="#f2f2f2"/>
 <path d="M385 130H470Q565 140 572 215V295H385Z" fill="#dadada"/>
 <path d="M478 97L530 62Q625 80 625 180L574 206Q565 125 478 97Z" fill="#5ba5e0"/>
 <!-- shell -->
 <path d="M705 120L760 62H940V240L890 295H705Z" fill="#c4c4c4" stroke="#9a9a9a" stroke-width="7" stroke-linejoin="round"/>
 <path d="M705 120L760 62H940L890 120Z" fill="#eeeeee"/>
 <path d="M705 120H890V295H705Z" fill="#f4f4f4" stroke="#9a9a9a" stroke-width="7"/>
 <path d="M735 150H792V215H735Z" fill="#3f8cd2"/><path d="M735 262L792 212H852V262Z" fill="#8cc5f2"/><path d="M735 215L792 215L735 262Z" fill="#3f8cd2"/>
</g>
<!-- group D: origin 305,48 -->
<g transform="translate(305,48) scale(0.08584)">
 <path d="M180 100H300V215H180Z" fill="#5ba5e0"/><path d="M180 100L212 62H335L300 100Z" fill="#8cc5f2"/><path d="M300 100L335 62V180L300 215Z" fill="#4790d4"/>
 <path d="M95 165H245V295H95Z" fill="#5ba5e0"/><path d="M95 165L130 130H180V165Z" fill="#8cc5f2"/><path d="M245 215H300L265 250L245 295Z" fill="#4790d4"/>
 <!-- split -->
 <path d="M435 215H605L640 185V250L605 285H435Z" fill="#c0c0c0" stroke="#9a9a9a" stroke-width="6" stroke-linejoin="round"/>
 <path d="M435 215H605V285H435Z" fill="#dedede"/>
 <path d="M435 115H605V168H435Z" fill="#5ba5e0"/><path d="M435 115L480 62H640L605 115Z" fill="#8cc5f2"/><path d="M605 115L640 62V130L605 168Z" fill="#4790d4"/>
 <path d="M420 195H605L660 140" fill="none" stroke="#bfe0f7" stroke-width="15"/>
 <!-- move -->
 <path d="M790 178H935M862 105V250" stroke="#333" stroke-width="16" fill="none"/>
 <path d="M748 178L800 148V208ZM977 178L925 148V208ZM862 64L832 116H892ZM862 292L832 240H892Z" fill="#333"/>
</g>
<!-- group E: origin 395,48 zoom 8.25 -->
<g transform="translate(395,48) scale(0.12121)">
 <path d="M68 148H132V207H68Z" fill="#dcdcdc" stroke="#a8a8a8" stroke-width="4"/>
 <path d="M135 148L157 125H220V180L195 207H135Z" fill="#c6c6c6" stroke="#a8a8a8" stroke-width="4"/><path d="M135 148H195V207H135Z" fill="#dedede"/><path d="M135 148L157 125H220L195 148Z" fill="#efefef"/>
 <path d="M68 95H135V146H68Z" fill="#5ba5e0"/><path d="M68 95L90 68H155L135 95Z" fill="#8cc5f2"/><path d="M135 95L155 68V125L135 146Z" fill="#4790d4"/>
 <path d="M195 48L203 70L222 58L214 80L238 86L216 96L228 116L205 108L198 130L188 108L166 118L176 96L154 88L177 80L168 58L188 69Z" fill="#f6a51c"/>
 <!-- joint -->
 <path d="M310 95L355 55L375 60V115L355 125V170L325 195L310 185Z" fill="#c2c6ca" stroke="#8a8e92" stroke-width="4" stroke-linejoin="round"/>
 <path d="M395 115L425 62L460 100V190L440 195L395 160Z" fill="#c2c6ca" stroke="#8a8e92" stroke-width="4" stroke-linejoin="round"/>
 <path d="M375 92L398 100M375 112L395 125" stroke="#6a6e72" stroke-width="4"/>
 <!-- construct -->
 <path d="M712 95L760 45H800V155L758 198H712Z" fill="#d0d0d0" stroke="#a0a0a0" stroke-width="4" stroke-linejoin="round"/>
 <path d="M712 95H747V198H712Z" fill="#e8e8e8"/><path d="M712 95L760 45H800L747 95Z" fill="#f2f2f2"/>
 <path d="M747 95L800 45V155L758 198H747Z" fill="#56bd78"/>
 <path d="M820 88L865 45V160L820 202Z" fill="#ee9c66"/>
</g>
<!-- group F: origin 530,48 zoom 7.615 -->
<g transform="translate(530,48) scale(0.13132)">
 <path d="M68 80V118M205 80V118M75 98H198" stroke="#444" stroke-width="5" fill="none"/><path d="M70 98L92 88V108ZM203 98L181 88V108Z" fill="#444"/>
 <rect x="68" y="122" width="138" height="34" fill="#f2a91a"/><path d="M80 122V134M92 122V130M104 122V134M116 122V130M128 122V134M140 122V130M152 122V134M164 122V130M176 122V134M188 122V130" stroke="#c07c08" stroke-width="4"/>
 <rect x="428" y="42" width="140" height="143" rx="4" fill="#6ebcf4"/>
 <path d="M428 185V135L470 100L515 150L545 125L568 150V181Q568 185 564 185Z" fill="#3a8fd2"/>
 <circle cx="527" cy="82" r="15" fill="#eaf6d8"/>
 <rect x="775" y="42" width="136" height="105" fill="none" stroke="#72c594" stroke-width="6" stroke-dasharray="17 10"/>
 <path d="M880 110V182L896 167L909 194L921 188L908 162H930Z" fill="#fff" stroke="#333" stroke-width="5" stroke-linejoin="round"/>
</g>
</svg>

<!--/ICONS-->

<!--/CHROME-->

<!--BROWSER-->
<div class="abs" style="left:2.6px;top:91px;width:193px;height:15.8px;background:#f1f1f1;border:1px solid #dadada"></div>
<svg class="abs" style="left:0;top:90px" width="200" height="18" viewBox="0 90 200 18"><path d="M8.4 96.6V100.6L5.8 98.6ZM11.6 96.6V100.6L9 98.6Z" fill="#222"/><circle cx="185.3" cy="98.6" r="2.9" fill="#1e1e1e"/><path d="M183.7 98.6H186.9" stroke="#fff" stroke-width="0.9"/><path d="M192.6 95V102.4L194.8 98.7Z" fill="#c4c4c4"/><path d="M192.4 94.6V102.8" stroke="#aaa" stroke-width="0.7"/></svg>
<div class="t" id="brw" style="left:18.8px;top:95.2px;font-size:7.3px;color:#777;-webkit-text-stroke:0.15px #777;transform:scaleX(0.8832);transform-origin:0 50%">BROWSER</div>
<div class="abs" style="left:4.8px;top:110px;width:3.8px;height:387.2px;background:#cbcbcb"></div>
<div class="abs" style="left:4.8px;top:138.5px;width:3.8px;height:53.3px;background:#8c8c8c"></div>
<div class="row" style="top:110.30px;width:63.0px;height:12.5px"></div>
<div class="rt" style="top:112.90px">Body1</div>
<div class="row" style="top:125.80px;width:63.0px;height:12.5px"></div>
<div class="rt" style="top:128.40px">Body2</div>
<div class="row" style="top:141.30px;width:63.0px;height:12.5px"></div>
<div class="rt" style="top:143.90px">Body3</div>
<div class="row" style="top:156.80px;width:63.0px;height:12.5px"></div>
<div class="rt" style="top:159.40px">Body7</div>
<div class="row" style="top:172.30px;width:63.0px;height:12.5px"></div>
<div class="rt" style="top:174.90px">Body8</div>
<div class="row" style="top:187.80px;width:63.0px;height:12.5px"></div>
<div class="rt" style="top:190.40px">Body9</div>
<div class="row" style="top:203.30px;width:66.7px;height:12.5px"></div>
<div class="rt" style="top:205.90px">Body14</div>
<div class="row" style="top:218.80px;width:59.3px;height:12.5px"></div>
<div class="rt" style="top:221.40px">linsin</div>
<div class="row" style="top:234.30px;width:69.3px;height:12.5px"></div>
<div class="rt" style="top:236.90px">linsin (1)</div>
<div class="row" style="top:249.80px;width:66.7px;height:12.5px"></div>
<div class="rt" style="top:252.40px">Body18</div>
<div class="row" style="top:265.30px;width:66.7px;height:12.5px"></div>
<div class="rt" style="top:267.90px">Body19</div>
<div class="row" style="top:280.80px;width:66.7px;height:12.5px"></div>
<div class="rt" style="top:283.40px">Body20</div>
<div class="row" style="top:296.30px;width:66.7px;height:12.5px"></div>
<div class="rt" style="top:298.90px">Body21</div>
<div class="row" style="top:311.80px;width:66.7px;height:12.5px"></div>
<div class="rt" style="top:314.40px">Body22</div>
<div class="row" style="top:327.30px;width:66.7px;height:12.5px"></div>
<div class="rt" style="top:329.90px">Body25</div>
<div class="row" style="top:342.80px;width:66.7px;height:12.5px"></div>
<div class="rt" style="top:345.40px">Body26</div>
<div class="row" style="top:358.30px;width:66.7px;height:12.5px"></div>
<div class="rt" style="top:360.90px">Body27</div>
<div class="row" style="top:373.80px;width:66.7px;height:12.5px"></div>
<div class="rt" style="top:376.40px">Body28</div>
<div class="row" style="top:389.30px;width:66.7px;height:12.5px"></div>
<div class="rt" style="top:391.90px">Body35</div>
<div class="row" style="top:404.80px;width:66.7px;height:12.5px"></div>
<div class="rt" style="top:407.40px">Body38</div>
<div class="row" style="top:420.30px;width:66.7px;height:12.5px"></div>
<div class="rt" style="top:422.90px">Body39</div>
<div class="row" style="top:435.80px;width:66.7px;height:12.5px"></div>
<div class="rt" style="top:438.40px">Body40</div>
<div class="row" style="top:451.30px;width:66.7px;height:12.5px"></div>
<div class="rt" style="top:453.90px">Body42</div>
<div class="row" style="left:36.7px;top:466.80px;width:74.3px;height:12.5px"></div>
<div class="rt" style="left:75px;top:469.40px">Sketches</div>
<div class="row" style="top:482.30px;width:68.8px;height:12.5px"></div>
<div class="rt" style="top:484.90px">Sketch2</div>
<svg class="abs" style="left:0;top:105px" width="130" height="400" viewBox="0 105 130 400"><defs>
<linearGradient id="gb" x1="0" y1="0" x2="1" y2="0"><stop offset="0" stop-color="#f2f2f2"/><stop offset="1" stop-color="#c4c4c4"/></linearGradient>
</defs><g transform="translate(0,0.00)"><path d="M50.7 116.5Q56 110.2 61.3 116.5Q56 122.8 50.7 116.5Z" fill="#9a9a9a"/><circle cx="56" cy="116.5" r="2.15" fill="none" stroke="#ececec" stroke-width="0.75"/><rect x="67.4" y="111.4" width="10.1" height="9.8" rx="2.4" fill="#fdfdfd" stroke="#676767" stroke-width="0.8"/><rect x="69.8" y="115" width="5.6" height="5.6" fill="url(#gb)"/></g><g transform="translate(0,15.50)"><path d="M50.7 116.5Q56 110.2 61.3 116.5Q56 122.8 50.7 116.5Z" fill="#9a9a9a"/><circle cx="56" cy="116.5" r="2.15" fill="none" stroke="#ececec" stroke-width="0.75"/><rect x="67.4" y="111.4" width="10.1" height="9.8" rx="2.4" fill="#fdfdfd" stroke="#676767" stroke-width="0.8"/><rect x="69.8" y="115" width="5.6" height="5.6" fill="url(#gb)"/></g><g transform="translate(0,31.00)"><path d="M50.7 116.5Q56 110.2 61.3 116.5Q56 122.8 50.7 116.5Z" fill="#9a9a9a"/><circle cx="56" cy="116.5" r="2.15" fill="none" stroke="#ececec" stroke-width="0.75"/><rect x="67.4" y="111.4" width="10.1" height="9.8" rx="2.4" fill="#fdfdfd" stroke="#676767" stroke-width="0.8"/><rect x="69.8" y="115" width="5.6" height="5.6" fill="url(#gb)"/></g><g transform="translate(0,46.50)"><path d="M50.7 116.5Q56 110.2 61.3 116.5Q56 122.8 50.7 116.5Z" fill="#9a9a9a"/><circle cx="56" cy="116.5" r="2.15" fill="none" stroke="#ececec" stroke-width="0.75"/><rect x="67.4" y="111.4" width="10.1" height="9.8" rx="2.4" fill="#fdfdfd" stroke="#676767" stroke-width="0.8"/><rect x="69.8" y="115" width="5.6" height="5.6" fill="url(#gb)"/></g><g transform="translate(0,62.00)"><path d="M50.7 116.5Q56 110.2 61.3 116.5Q56 122.8 50.7 116.5Z" fill="#9a9a9a"/><circle cx="56" cy="116.5" r="2.15" fill="none" stroke="#ececec" stroke-width="0.75"/><rect x="67.4" y="111.4" width="10.1" height="9.8" rx="2.4" fill="#fdfdfd" stroke="#676767" stroke-width="0.8"/><rect x="69.8" y="115" width="5.6" height="5.6" fill="url(#gb)"/></g><g transform="translate(0,77.50)"><path d="M50.7 116.5Q56 110.2 61.3 116.5Q56 122.8 50.7 116.5Z" fill="#9a9a9a"/><circle cx="56" cy="116.5" r="2.15" fill="none" stroke="#ececec" stroke-width="0.75"/><rect x="67.4" y="111.4" width="10.1" height="9.8" rx="2.4" fill="#fdfdfd" stroke="#676767" stroke-width="0.8"/><rect x="69.8" y="115" width="5.6" height="5.6" fill="url(#gb)"/></g><g transform="translate(0,93.00)"><path d="M50.7 116.5Q56 110.2 61.3 116.5Q56 122.8 50.7 116.5Z" fill="#9a9a9a"/><circle cx="56" cy="116.5" r="2.15" fill="none" stroke="#ececec" stroke-width="0.75"/><rect x="67.4" y="111.4" width="10.1" height="9.8" rx="2.4" fill="#fdfdfd" stroke="#676767" stroke-width="0.8"/><rect x="69.8" y="115" width="5.6" height="5.6" fill="url(#gb)"/></g><g transform="translate(0,108.50)"><path d="M50.7 116.5Q56 110.2 61.3 116.5Q56 122.8 50.7 116.5Z" fill="#9a9a9a"/><circle cx="56" cy="116.5" r="2.15" fill="none" stroke="#ececec" stroke-width="0.75"/><rect x="67.4" y="111.4" width="10.1" height="9.8" rx="2.4" fill="#fdfdfd" stroke="#676767" stroke-width="0.8"/><rect x="69.8" y="115" width="5.6" height="5.6" fill="url(#gb)"/></g><g transform="translate(0,124.00)"><path d="M50.7 116.5Q56 110.2 61.3 116.5Q56 122.8 50.7 116.5Z" fill="#9a9a9a"/><circle cx="56" cy="116.5" r="2.15" fill="none" stroke="#ececec" stroke-width="0.75"/><rect x="67.4" y="111.4" width="10.1" height="9.8" rx="2.4" fill="#fdfdfd" stroke="#676767" stroke-width="0.8"/><rect x="69.8" y="115" width="5.6" height="5.6" fill="url(#gb)"/></g><g transform="translate(0,139.50)"><path d="M50.7 116.5Q56 110.2 61.3 116.5Q56 122.8 50.7 116.5Z" fill="#9a9a9a"/><circle cx="56" cy="116.5" r="2.15" fill="none" stroke="#ececec" stroke-width="0.75"/><rect x="67.4" y="111.4" width="10.1" height="9.8" rx="2.4" fill="#fdfdfd" stroke="#676767" stroke-width="0.8"/><rect x="69.8" y="115" width="5.6" height="5.6" fill="url(#gb)"/></g><g transform="translate(0,155.00)"><path d="M50.7 116.5Q56 110.2 61.3 116.5Q56 122.8 50.7 116.5Z" fill="#9a9a9a"/><circle cx="56" cy="116.5" r="2.15" fill="none" stroke="#ececec" stroke-width="0.75"/><rect x="67.4" y="111.4" width="10.1" height="9.8" rx="2.4" fill="#fdfdfd" stroke="#676767" stroke-width="0.8"/><rect x="69.8" y="115" width="5.6" height="5.6" fill="url(#gb)"/></g><g transform="translate(0,170.50)"><path d="M50.7 116.5Q56 110.2 61.3 116.5Q56 122.8 50.7 116.5Z" fill="#9a9a9a"/><circle cx="56" cy="116.5" r="2.15" fill="none" stroke="#ececec" stroke-width="0.75"/><rect x="67.4" y="111.4" width="10.1" height="9.8" rx="2.4" fill="#fdfdfd" stroke="#676767" stroke-width="0.8"/><rect x="69.8" y="115" width="5.6" height="5.6" fill="url(#gb)"/></g><g transform="translate(0,186.00)"><path d="M50.7 116.5Q56 110.2 61.3 116.5Q56 122.8 50.7 116.5Z" fill="#9a9a9a"/><circle cx="56" cy="116.5" r="2.15" fill="none" stroke="#ececec" stroke-width="0.75"/><rect x="67.4" y="111.4" width="10.1" height="9.8" rx="2.4" fill="#fdfdfd" stroke="#676767" stroke-width="0.8"/><rect x="69.8" y="115" width="5.6" height="5.6" fill="url(#gb)"/></g><g transform="translate(0,201.50)"><path d="M50.7 116.5Q56 110.2 61.3 116.5Q56 122.8 50.7 116.5Z" fill="#9a9a9a"/><circle cx="56" cy="116.5" r="2.15" fill="none" stroke="#ececec" stroke-width="0.75"/><rect x="67.4" y="111.4" width="10.1" height="9.8" rx="2.4" fill="#fdfdfd" stroke="#676767" stroke-width="0.8"/><rect x="69.8" y="115" width="5.6" height="5.6" fill="url(#gb)"/></g><g transform="translate(0,217.00)"><path d="M50.7 116.5Q56 110.2 61.3 116.5Q56 122.8 50.7 116.5Z" fill="#9a9a9a"/><circle cx="56" cy="116.5" r="2.15" fill="none" stroke="#ececec" stroke-width="0.75"/><rect x="67.4" y="111.4" width="10.1" height="9.8" rx="2.4" fill="#fdfdfd" stroke="#676767" stroke-width="0.8"/><rect x="69.8" y="115" width="5.6" height="5.6" fill="url(#gb)"/></g><g transform="translate(0,232.50)"><path d="M50.7 116.5Q56 110.2 61.3 116.5Q56 122.8 50.7 116.5Z" fill="#9a9a9a"/><circle cx="56" cy="116.5" r="2.15" fill="none" stroke="#ececec" stroke-width="0.75"/><rect x="67.4" y="111.4" width="10.1" height="9.8" rx="2.4" fill="#fdfdfd" stroke="#676767" stroke-width="0.8"/><rect x="69.8" y="115" width="5.6" height="5.6" fill="url(#gb)"/></g><g transform="translate(0,248.00)"><path d="M50.7 116.5Q56 110.2 61.3 116.5Q56 122.8 50.7 116.5Z" fill="#9a9a9a"/><circle cx="56" cy="116.5" r="2.15" fill="none" stroke="#ececec" stroke-width="0.75"/><rect x="67.4" y="111.4" width="10.1" height="9.8" rx="2.4" fill="#fdfdfd" stroke="#676767" stroke-width="0.8"/><rect x="69.8" y="115" width="5.6" height="5.6" fill="url(#gb)"/></g><g transform="translate(0,263.50)"><path d="M50.7 116.5Q56 110.2 61.3 116.5Q56 122.8 50.7 116.5Z" fill="#9a9a9a"/><circle cx="56" cy="116.5" r="2.15" fill="none" stroke="#ececec" stroke-width="0.75"/><rect x="67.4" y="111.4" width="10.1" height="9.8" rx="2.4" fill="#fdfdfd" stroke="#676767" stroke-width="0.8"/><rect x="69.8" y="115" width="5.6" height="5.6" fill="url(#gb)"/></g><g transform="translate(0,279.00)"><path d="M50.7 116.5Q56 110.2 61.3 116.5Q56 122.8 50.7 116.5Z" fill="#9a9a9a"/><circle cx="56" cy="116.5" r="2.15" fill="none" stroke="#ececec" stroke-width="0.75"/><rect x="67.4" y="111.4" width="10.1" height="9.8" rx="2.4" fill="#fdfdfd" stroke="#676767" stroke-width="0.8"/><rect x="69.8" y="115" width="5.6" height="5.6" fill="url(#gb)"/></g><g transform="translate(0,294.50)"><path d="M50.7 116.5Q56 110.2 61.3 116.5Q56 122.8 50.7 116.5Z" fill="#9a9a9a"/><circle cx="56" cy="116.5" r="2.15" fill="none" stroke="#ececec" stroke-width="0.75"/><rect x="67.4" y="111.4" width="10.1" height="9.8" rx="2.4" fill="#fdfdfd" stroke="#676767" stroke-width="0.8"/><rect x="69.8" y="115" width="5.6" height="5.6" fill="url(#gb)"/></g><g transform="translate(0,310.00)"><path d="M50.7 116.5Q56 110.2 61.3 116.5Q56 122.8 50.7 116.5Z" fill="#9a9a9a"/><circle cx="56" cy="116.5" r="2.15" fill="none" stroke="#ececec" stroke-width="0.75"/><rect x="67.4" y="111.4" width="10.1" height="9.8" rx="2.4" fill="#fdfdfd" stroke="#676767" stroke-width="0.8"/><rect x="69.8" y="115" width="5.6" height="5.6" fill="url(#gb)"/></g><g transform="translate(0,325.50)"><path d="M50.7 116.5Q56 110.2 61.3 116.5Q56 122.8 50.7 116.5Z" fill="#9a9a9a"/><circle cx="56" cy="116.5" r="2.15" fill="none" stroke="#ececec" stroke-width="0.75"/><rect x="67.4" y="111.4" width="10.1" height="9.8" rx="2.4" fill="#fdfdfd" stroke="#676767" stroke-width="0.8"/><rect x="69.8" y="115" width="5.6" height="5.6" fill="url(#gb)"/></g><g transform="translate(0,341.00)"><path d="M50.7 116.5Q56 110.2 61.3 116.5Q56 122.8 50.7 116.5Z" fill="#9a9a9a"/><circle cx="56" cy="116.5" r="2.15" fill="none" stroke="#ececec" stroke-width="0.75"/><rect x="67.4" y="111.4" width="10.1" height="9.8" rx="2.4" fill="#fdfdfd" stroke="#676767" stroke-width="0.8"/><rect x="69.8" y="115" width="5.6" height="5.6" fill="url(#gb)"/></g><g transform="translate(-11.2,356.50)"><path d="M50.7 116.5Q56 110.2 61.3 116.5Q56 122.8 50.7 116.5Z" fill="#9a9a9a"/><circle cx="56" cy="116.5" r="2.15" fill="none" stroke="#ececec" stroke-width="0.75"/></g><g transform="translate(0,356.50)"><path d="M24.8 119.8H32.2V112.5Z" fill="#2a2a2a"/><path d="M27.6 118.6H31V115.3Z" fill="#d0d0d0"/><path d="M55.6 112.2H59.4L60.3 113.3H65.7V120.2H55.6Z" fill="#8a8a8a"/><path d="M55.6 113.9H65.7" stroke="#a8a8a8" stroke-width="0.5"/></g><g transform="translate(0,372.00)" opacity="0.32"><path d="M50.7 116.5Q56 110.2 61.3 116.5Q56 122.8 50.7 116.5Z" fill="#9a9a9a"/><circle cx="56" cy="116.5" r="2.15" fill="none" stroke="#ececec" stroke-width="0.75"/><path d="M52 120.4L60 112.6" stroke="#8a8a8a" stroke-width="0.8"/></g><g transform="translate(0,372.00)"><path d="M68.3 112H76.4V120.2H68.3Z" fill="none" stroke="#555" stroke-width="0.7" stroke-dasharray="1.6 1"/><g fill="#333"><circle cx="68.3" cy="112" r="0.8"/><circle cx="76.4" cy="112" r="0.8"/><circle cx="68.3" cy="120.2" r="0.8"/></g><rect x="72.8" y="118.2" width="4.6" height="3.6" fill="#d8343c"/><path d="M73.9 118.2V117.2Q75.1 115.6 76.3 117.2V118.2" fill="none" stroke="#d8343c" stroke-width="0.8"/><rect x="74.4" y="119.4" width="1.4" height="1" fill="#fff"/></g></svg>
<!--/BROWSER-->

<!--BOTTOM-->
<div class="abs" style="left:2.6px;top:512.6px;width:193px;height:16.2px;background:#f1f1f1;border:1px solid #dcdcdc"></div>
<div class="t" id="cmt" style="left:18.8px;top:516.9px;font-size:7.3px;color:#777;-webkit-text-stroke:0.15px #777;transform:scaleX(0.8502);transform-origin:0 50%">COMMENTS</div>
<svg class="abs" style="left:180px;top:512px" width="20" height="18" viewBox="180 512 20 18"><circle cx="185.3" cy="520.5" r="2.9" fill="#1e1e1e"/><path d="M183.7 520.5H186.9M185.3 518.9V522.1" stroke="#fff" stroke-width="0.9"/><path d="M192.6 517V524.4L194.8 520.7Z" fill="#c4c4c4"/><path d="M192.4 516.6V524.8" stroke="#aaa" stroke-width="0.7"/></svg>
<div class="abs" style="left:413.2px;top:513.2px;width:162.8px;height:15px;background:#f0f0f0"></div>
<div class="abs" style="left:413.2px;top:513.2px;width:20.9px;height:15px;background:#1a96d8"></div>
<svg class="abs" style="left:410px;top:510px" width="170" height="22" viewBox="410 510 170 22">
<!-- orbit -->
<path d="M420.5 516.6V525.6" stroke="#d8ecf8" stroke-width="1.1"/><path d="M416.2 521.6H424.8" stroke="#1d3a52" stroke-width="0.9"/>
<path d="M417 519.4Q416 523.6 419.4 524.2" stroke="#14283a" stroke-width="0.9" fill="none"/><circle cx="417.8" cy="523.2" r="1.1" fill="#14283a"/>
<path d="M422 518Q424.6 519.6 423.4 523.4" stroke="#8cc8ee" stroke-width="0.7" fill="none"/>
<path d="M428.6 520H432.4L430.5 522Z" fill="#fff"/>
<!-- look at -->
<path d="M437 518.6H446.4V525.2H437Z" fill="#f4f4f4" stroke="#4c4c4c" stroke-width="0.9"/><path d="M437 518.6L438.6 516.2H441L441.8 517.4L443 516H445.2L446.4 518.6" fill="#d8d8d8" stroke="#4c4c4c" stroke-width="0.8"/>
<rect x="438.8" y="520.4" width="5.8" height="2.6" fill="#fff" stroke="#4c4c4c" stroke-width="0.8"/>
<!-- hand -->
<path d="M455.6 521.2L454 519.6Q453.2 518.8 454 518.4Q454.8 518 455.6 518.8L456.6 519.8V516.6Q456.7 515.8 457.3 515.8Q458 515.8 458 516.6V515.8Q458.1 515.1 458.8 515.1Q459.5 515.1 459.6 515.8V516.2Q459.7 515.5 460.4 515.5Q461.1 515.5 461.2 516.3V517Q461.4 516.4 462 516.5Q462.7 516.6 462.7 517.4V521.6Q462.6 523.6 461.6 525.4H457.2Q456.2 523.4 455.6 521.2Z" fill="#fff" stroke="#444" stroke-width="0.8" stroke-linejoin="round"/>
<path d="M458 516.6V519.6M459.6 516.2V519.6M461.2 517V519.8" stroke="#444" stroke-width="0.6"/>
<!-- zoom -->
<circle cx="472.7" cy="520.4" r="2.9" fill="#f4f8fb" stroke="#4a4a4a" stroke-width="0.9"/><path d="M474.9 522.6L477.6 525.2" stroke="#333" stroke-width="1.5" stroke-linecap="round"/>
<path d="M477.4 517.2H479.8M478.6 516V518.4M477.4 519.4H479.8" stroke="#444" stroke-width="0.7"/>
<!-- zoom window -->
<rect x="486.2" y="515.8" width="9.4" height="8.6" fill="none" stroke="#9a9a9a" stroke-width="0.6" stroke-dasharray="1.2 1"/>
<circle cx="490.4" cy="519.9" r="3.7" fill="#eef3f6" stroke="#4a4a4a" stroke-width="0.9"/><path d="M493.2 522.6L496.4 525.6" stroke="#333" stroke-width="1.6" stroke-linecap="round"/>
<path d="M500.5 519.8H503.7L502.1 521.7Z" fill="#2a2a2a"/>
<!-- display -->
<rect x="512.7" y="515.9" width="10" height="7.7" rx="0.8" fill="#8a909a"/><rect x="514.4" y="517.5" width="6.8" height="4.6" fill="#8db6ea"/><path d="M516.4 523.6H519.2L520 525.5H515.6Z" fill="#8a909a"/><rect x="516.8" y="524" width="2" height="0.9" fill="#fff"/>
<path d="M525 519.8H528.2L526.6 521.7Z" fill="#2a2a2a"/>
<!-- grid -->
<rect x="532.9" y="516.1" width="9.8" height="9.2" fill="#9c9c9c" stroke="#7c7c7c" stroke-width="0.7"/><path d="M535.4 516.1V525.3M537.8 516.1V525.3M540.2 516.1V525.3M532.9 518.4H542.7M532.9 520.7H542.7M532.9 523H542.7" stroke="#8a8a8a" stroke-width="0.4"/><rect x="532.9" y="523.6" width="9.8" height="1.7" fill="#8a8a8a"/>
<path d="M544.9 519.8H548.1L546.5 521.7Z" fill="#2a2a2a"/>
<!-- viewports -->
<rect x="552.7" y="516.4" width="10" height="8.2" rx="0.8" fill="#5c80b8"/><rect x="553.8" y="517.4" width="3.5" height="2.7" fill="#a9c5ea"/><rect x="558.1" y="517.4" width="3.5" height="2.7" fill="#a9c5ea"/><rect x="553.8" y="520.9" width="3.5" height="2.7" fill="#a9c5ea"/><rect x="558.1" y="520.9" width="3.5" height="2.7" fill="#a9c5ea"/>
<path d="M564.8 519.8H568L566.4 521.7Z" fill="#2a2a2a"/>
</svg>

<!--/BOTTOM-->

<div id="taskbar" class="abs"></div>
<!--TASKBAR-->
<div class="abs" style="left:288.1px;top:531px;width:30.8px;height:24.6px;background:#3a3a3b"></div>
<svg class="abs" style="left:0;top:531px" width="990" height="26" viewBox="0 531 990 26">
<g fill="#86bbe8"><rect x="67" y="555.5" width="25.6" height="1.5"/><rect x="131" y="555.5" width="25.5" height="1.5"/><rect x="194.6" y="555.5" width="25.6" height="1.5"/><rect x="258.5" y="555.5" width="25.9" height="1.5"/><rect x="322.9" y="555.5" width="24.9" height="1.5"/></g>
<rect x="288.1" y="555.4" width="30.8" height="1.6" fill="#9ccdf3"/>
<!-- windows -->
<path d="M10.2 540.1L14.6 539.5V543.7H10.2ZM15.3 539.4L21 538.6V543.7H15.3ZM10.2 544.4H14.6V548.6L10.2 548ZM15.3 544.4H21V549.5L15.3 548.7Z" fill="#fff"/>
<!-- search -->
<circle cx="48.5" cy="542.5" r="2.9" fill="none" stroke="#fff" stroke-width="0.9"/><path d="M46.4 544.7L41.6 549.2" stroke="#fff" stroke-width="0.9"/>
<!-- explorer -->
<path d="M72.4 538.2H77.2L78.4 539.4H86.6V549.6H72.4Z" fill="#f8d775"/><path d="M72.4 540.4H86.6V549.6H72.4Z" fill="#fbe494"/><path d="M74.6 544.2H84.4V549.6H74.6Z" fill="#3f9bdb"/><rect x="77" y="546.4" width="5" height="3.2" fill="#d8ecf8"/>
<!-- IE -->
<g transform="translate(111.4,544)"><ellipse cx="0" cy="0.3" rx="8" ry="3.6" transform="rotate(-32)" fill="none" stroke="#f2b830" stroke-width="1.1"/><path d="M5.4 1H-2.6Q-2.2 3.4 0.4 3.4Q2 3.4 2.8 2.2H5.2Q4 5.6 0.3 5.6Q-5 5.4 -5.2 0.2Q-5 -5.2 0.3 -5.4Q5.6 -5.2 5.4 1ZM-2.6 -1H2.8Q2.4 -3.2 0.2 -3.2Q-2.2 -3.2 -2.6 -1Z" fill="#3cc3f5"/></g>
<!-- excel -->
<rect x="143" y="538.6" width="7" height="10" fill="#e8f1ea"/><path d="M145 539.6H149V547.6H145Z" fill="none" stroke="#2f8a55" stroke-width="0.8"/><path d="M147 539.6V547.6" stroke="#2f8a55" stroke-width="0.6"/>
<path d="M136.2 538.6L144.8 537.2V550L136.2 548.6Z" fill="#1f7a46"/><path d="M138.4 541L142.4 546.4M142.4 541L138.4 546.4" stroke="#fff" stroke-width="1.1"/>
<!-- word -->
<rect x="175" y="538.6" width="7.1" height="10" fill="#e6ebf5"/><path d="M177 540.4H181M177 542.2H181M177 544H181M177 545.8H181" stroke="#7f97c6" stroke-width="0.7"/>
<path d="M168.3 538.6L176.9 537.2V550L168.3 548.6Z" fill="#2b5aa6"/><path d="M169.8 541.2L171 546.2L172.5 542.2L174 546.2L175.3 541.2" stroke="#fff" stroke-width="0.9" fill="none"/>
<!-- firefox -->
<defs><linearGradient id="gff" x1="0.9" y1="0.1" x2="0.15" y2="0.85"><stop offset="0" stop-color="#fde04a"/><stop offset="0.35" stop-color="#fbb030"/><stop offset="0.65" stop-color="#f56a2c"/><stop offset="1" stop-color="#ee3a4a"/></linearGradient></defs>
<circle cx="207.3" cy="544.2" r="6.7" fill="url(#gff)"/><path d="M208.6 536.6Q212.4 538 213.6 541.6Q211.6 539.4 209.6 539.6Q210 538 208.6 536.6Z" fill="#fde04a"/>
<circle cx="207.5" cy="543" r="3.3" fill="#3b55d6"/><path d="M204.4 542Q206.2 540.2 208.6 540.6Q207 541.6 207.2 542.8Q205.8 542.8 204.4 542Z" fill="#f56a2c"/><path d="M204.4 544.4Q206.6 545.6 209.4 544.4Q210.6 545.8 209 547.2Q205.6 547.6 204.4 544.4Z" fill="#f45a30"/><path d="M207.4 542.2Q209 541.6 210.2 542.8L208.4 543.6Z" fill="#8ec8fa"/>
<!-- floppy -->
<path d="M232.4 536.8H245.4L246.5 538V550.8H232.4Z" fill="#2b50c4"/><rect x="235.4" y="536.8" width="8.2" height="4.4" fill="#c9cfe0"/><rect x="240.2" y="537.4" width="2" height="3.2" fill="#2b50c4"/><rect x="234.2" y="543" width="10.6" height="7.8" fill="#f4e4e6"/><path d="M240.6 548.6H243.4" stroke="#555" stroke-width="0.8"/>
<!-- people -->
<g fill="#2aa6ea"><circle cx="271" cy="539.4" r="2"/><path d="M268.6 542Q271 541 273.4 542V548.4Q271 550.8 268.6 548.4Z"/><circle cx="266.4" cy="540.6" r="1.7"/><path d="M264 543.2Q266.2 542.2 267.8 543V548.6Q265.8 549.6 264.6 547.4Z"/><circle cx="275.6" cy="540.6" r="1.7"/><path d="M278 543.2Q275.8 542.2 274.2 543V548.6Q276.2 549.6 277.4 547.4Z"/></g>
<!-- fusion -->
<rect x="295.3" y="535.9" width="15.7" height="15.8" fill="#f7dfc6"/><path d="M299.2 538.8H307.4V541.6H302.2V543.4H306.2V546H302.2V549.8H299.2Z" fill="#e58738"/><path d="M304 546.4H308.8V549.6H304Z" fill="#f0b888"/><rect x="306" y="549" width="3.4" height="1.2" fill="#e9a066"/>
<!-- paint -->
<path d="M327.8 545.6Q328.6 539.4 335.2 538.6Q340.4 538.6 340.8 542.6Q340.6 545.6 337.6 545.4Q335.4 545.4 335.6 547.2Q335.8 549.8 332.4 549.8Q328 549.6 327.8 545.6Z" fill="#e8ecf2"/><circle cx="331.2" cy="543" r="1.1" fill="#e8483a"/><circle cx="334" cy="541" r="1.1" fill="#f2c230"/><circle cx="337.6" cy="541.4" r="1.1" fill="#48a8e8"/><circle cx="330.6" cy="546.6" r="1.1" fill="#58b858"/>
<path d="M341.6 536.6L336.6 547.6" stroke="#d89a58" stroke-width="1.3"/><path d="M341 536L342.6 537.2L341.4 539.2L340 538.4Z" fill="#e8a050"/><path d="M336.9 546.8L336 549.8L337.9 547.4Z" fill="#7a5a3a"/>
<!-- tray -->
<path d="M847.9 539.2H855.7V547L851.8 549L847.9 547Z" fill="#e8cf6a"/><path d="M851.8 539.2V549" stroke="#c4a840" stroke-width="0.6"/><circle cx="854.2" cy="547.2" r="1.7" fill="#32b84a"/>
<circle cx="867" cy="544.4" r="5.2" fill="#e03038"/><circle cx="867" cy="544.4" r="2.9" fill="none" stroke="#fff" stroke-width="1.1" stroke-dasharray="6.6 2.5"/><path d="M868.6 540.4L870.8 541.8L868.4 542.8ZM865.4 548.4L863.2 547L865.6 546Z" fill="#fff"/>
<path d="M879.6 540.4H888V546.6H879.6Z" fill="none" stroke="#fff" stroke-width="0.8"/><path d="M881.6 548.2H886M883.8 546.6V548.2" stroke="#fff" stroke-width="0.8"/><path d="M877.4 539.8H881.2V543.6H877.4Z" fill="#03050b" stroke="#fff" stroke-width="0.7"/>
<path d="M892.8 542.4H894.6L897 540.2V548.4L894.6 546.2H892.8Z" fill="none" stroke="#fff" stroke-width="0.75" stroke-linejoin="round"/><path d="M898.6 542.4Q899.8 544.3 898.6 546.2M900.2 541Q902.2 544.3 900.2 547.6" stroke="#fff" stroke-width="0.7" fill="none"/><path d="M901.8 539.8Q904.4 544.3 901.8 548.8" stroke="#aaa" stroke-width="0.6" fill="none"/>
<path d="M963.6 539.6H973.8V546.8H970.4L968.7 548.6L967 546.8H963.6Z" fill="none" stroke="#fff" stroke-width="0.85"/>
<path d="M987.4 531V557" stroke="#555" stroke-width="0.6"/>
</svg>
<div class="t" id="clk" style="left:922.4px;top:535.6px;font-size:8.2px;color:#fff;-webkit-text-stroke:0.15px #fff;transform:scaleX(0.8949);transform-origin:0 50%">11:10</div>
<div class="t" id="dat" style="left:910.2px;top:547.6px;font-size:8.2px;color:#fff;-webkit-text-stroke:0.15px #fff;transform:scaleX(0.8742);transform-origin:0 50%">2019. 10. 24.</div>

<!--/TASKBAR-->
</body>
</html>
